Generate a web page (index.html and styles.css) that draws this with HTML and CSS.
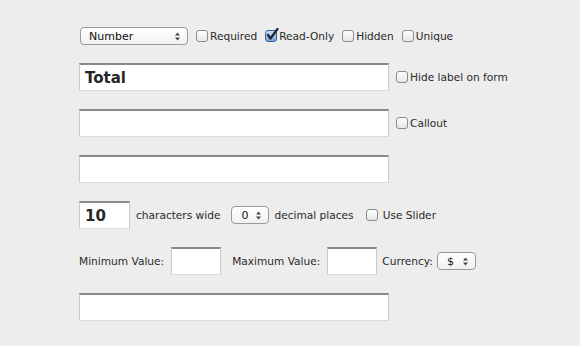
FILE: index.html
```html
<!DOCTYPE html>
<html lang="en">
<head>
    <meta charset="UTF-8">
    <link rel="stylesheet" href="styles.css">
    <title>Field options</title>
</head>
<body>
<div class="container">
    <div class="rowTop">
        <div class="popup popupType">
            <span class="popupText">Number</span>
            <svg class="popupArrows" width="7" height="9" viewBox="0 0 7 9"><path d="M3.5 0.5 L6 3.5 H1 Z M3.5 8.5 L6 5.5 H1 Z" fill="#444"/></svg>
        </div>
        <label class="check checkRequired"><span class="box"></span>Required</label>
        <label class="check"><span class="box boxChecked"><svg width="14" height="14" viewBox="0 0 14 14"><path d="M3 7 L5.5 10.5 L12.5 1" fill="none" stroke="#1a2233" stroke-width="2.2" stroke-linecap="round" stroke-linejoin="round"/></svg></span>Read-Only</label>
        <label class="check"><span class="box"></span>Hidden</label>
        <label class="check"><span class="box"></span>Unique</label>
    </div>

    <div class="row">
        <div class="textField wide boldText">Total</div>
        <label class="check sideCheck"><span class="box"></span>Hide label on form</label>
    </div>

    <div class="row">
        <div class="textField wide"></div>
        <label class="check sideCheck"><span class="box"></span>Callout</label>
    </div>

    <div class="row">
        <div class="textField wide"></div>
    </div>

    <div class="row">
        <div class="textField small boldText">10</div>
        <span class="label labelChars">characters wide</span>
        <div class="popup popupSmall popupDecimals">
            <span class="popupText">0</span>
            <svg class="popupArrows" width="7" height="9" viewBox="0 0 7 9"><path d="M3.5 0.5 L6 3.5 H1 Z M3.5 8.5 L6 5.5 H1 Z" fill="#444"/></svg>
        </div>
        <span class="label labelDecimals">decimal places</span>
        <label class="check checkSlider"><span class="box"></span>Use Slider</label>
    </div>

    <div class="row">
        <span class="label">Minimum Value:</span>
        <div class="textField small fieldMin"></div>
        <span class="label labelMax">Maximum Value:</span>
        <div class="textField small fieldMax"></div>
        <span class="label labelCurrency">Currency:</span>
        <div class="popup popupSmall popupCurrency">
            <span class="popupText">$</span>
            <svg class="popupArrows" width="7" height="9" viewBox="0 0 7 9"><path d="M3.5 0.5 L6 3.5 H1 Z M3.5 8.5 L6 5.5 H1 Z" fill="#444"/></svg>
        </div>
    </div>

    <div class="row">
        <div class="textField wide"></div>
    </div>
</div>
</body>
</html>
```

FILE: styles.css
```css
body {
    margin: 0;
    background-color: #ededed;
    font-family: "DejaVu Sans", "Liberation Sans", sans-serif;
    font-size: 10.6px;
    color: #2a2a2a;
}

.container {
    padding: 27px 0 0 79px;
    display: flex;
    flex-direction: column;
    gap: 18px;
}

.rowTop {
    display: flex;
    align-items: center;
    height: 18px;
}

.row {
    display: flex;
    align-items: center;
    height: 28px;
}

.popup {
    box-sizing: border-box;
    height: 18px;
    border: 1px solid #9a9a9a;
    border-radius: 4px;
    background: linear-gradient(#ffffff, #f1f1f1);
    display: flex;
    align-items: center;
    justify-content: space-between;
    padding: 0 6px 0 8px;
}

.popupType {
    width: 108px;
    margin-left: 1px;
}

.popupSmall {
    width: 38px;
    padding-left: 9px;
}

.popupText {
    font-size: 11px;
    color: #111;
}

.popupArrows {
    display: block;
}

.check {
    display: flex;
    align-items: center;
    white-space: nowrap;
    margin-left: 8px;
}

.checkRequired {
    margin-left: 8px;
}

.box {
    box-sizing: border-box;
    width: 12px;
    height: 12px;
    border: 1px solid #8c8c8c;
    border-radius: 3px;
    background: linear-gradient(#ffffff, #e6e6e6);
    margin-right: 2px;
    position: relative;
}

.boxChecked {
    border-color: #3b5f99;
    background: linear-gradient(#c9dcf5, #7ea6dd);
}

.boxChecked svg {
    position: absolute;
    left: -1px;
    top: -3px;
}

.textField {
    box-sizing: border-box;
    height: 28px;
    background-color: #fff;
    border: 1px solid #cacaca;
    border-top: 2px solid #8a8a8a;
    border-bottom-color: #dcdcdc;
    display: flex;
    align-items: center;
    padding-left: 5px;
}

.wide {
    width: 310px;
}

.small {
    width: 51px;
}

.boldText {
    font-weight: bold;
    font-size: 15px;
    color: #262626;
}

.sideCheck {
    margin-left: 7px;
}

.label {
    white-space: nowrap;
}

.labelChars {
    margin-left: 6px;
}

.popupDecimals {
    margin-left: 11px;
}

.labelDecimals {
    margin-left: 5px;
}

.checkSlider {
    margin-left: 12px;
}

.checkSlider .box {
    margin-right: 5px;
}

.fieldMin {
    margin-left: 7px;
    width: 50px;
}

.labelMax {
    margin-left: 11px;
}

.fieldMax {
    margin-left: 7px;
    width: 50px;
}

.labelCurrency {
    margin-left: 5px;
}

.popupCurrency {
    margin-left: 4px;
    width: 39px;
}
```
